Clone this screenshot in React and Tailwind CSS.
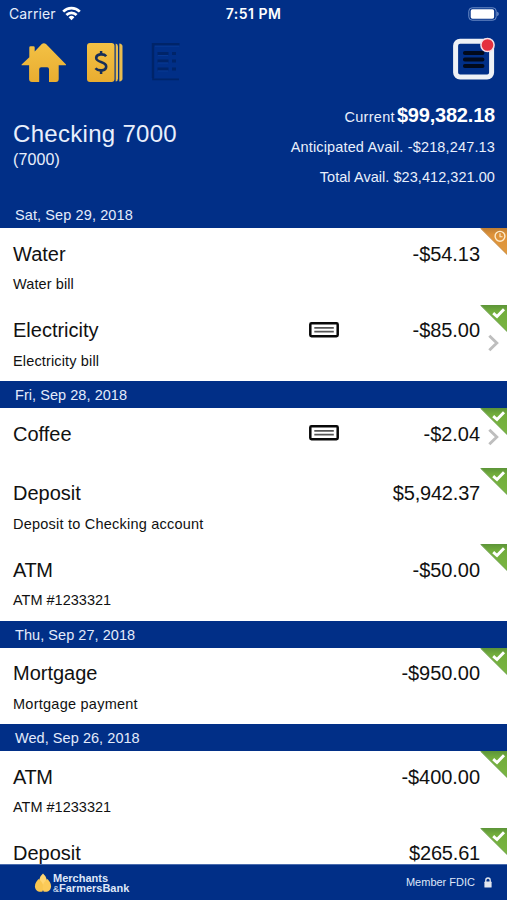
import React from "react";

const groups = [
  {
    date: null,
    rows: [
      { title: "Water", note: "Water bill", noteCls: "tracking-[0.1px]", amount: "-$54.13", pending: true },
      { title: "Electricity", note: "Electricity bill", noteCls: "tracking-[0.15px]", amount: "-$85.00", check: true, more: true },
    ],
  },
  {
    date: "Fri, Sep 28, 2018",
    dateCls: "tracking-[0.1px]",
    rows: [
      { title: "Coffee", amount: "-$2.04", check: true, more: true, short: true },
      { title: "Deposit", note: "Deposit to Checking account", noteCls: "tracking-[0.22px]", amount: "$5,942.37", amountCls: "tracking-[-0.2px]" },
      { title: "ATM", titleCls: "tracking-[-0.4px]", note: "ATM #1233321", amount: "-$50.00" },
    ],
  },
  {
    date: "Thu, Sep 27, 2018",
    rows: [{ title: "Mortgage", note: "Mortgage payment", noteCls: "tracking-[0.25px]", amount: "-$950.00" }],
  },
  {
    date: "Wed, Sep 26, 2018",
    rows: [
      { title: "ATM", titleCls: "tracking-[-0.4px]", note: "ATM #1233321", amount: "-$400.00" },
      { title: "Deposit", amount: "$265.61", amountCls: "tracking-[-0.2px]" },
    ],
  },
];

function Corner({ pending }) {
  return (
    <svg className="absolute right-0 top-0" width="27" height="27" viewBox="0 0 27 27">
      <defs>
        <linearGradient id="cornerGreen" x1="0" y1="0" x2="0" y2="1">
          <stop offset="0" stopColor="#5c9438" />
          <stop offset="0.25" stopColor="#72ad3c" />
          <stop offset="1" stopColor="#7ab542" />
        </linearGradient>
        <linearGradient id="cornerOrange" x1="0" y1="0" x2="0" y2="1">
          <stop offset="0" stopColor="#bd7e34" />
          <stop offset="0.25" stopColor="#dd9138" />
          <stop offset="1" stopColor="#e09a3e" />
        </linearGradient>
      </defs>
      <path d="M0.5 0H27V26.5Z" fill={pending ? "url(#cornerOrange)" : "url(#cornerGreen)"} />
      <path d="M0.5 0.3L27 26.5" stroke={pending ? "#b5762c" : "#558f35"} strokeWidth="1" opacity="0.7" />
      {pending ? (
        <g fill="none" stroke="#fdebcb" strokeWidth="1.4">
          <circle cx="20" cy="8.3" r="4.9" />
          <path d="M20 5.3V8.7H22.5" strokeWidth="1.1" />
        </g>
      ) : (
        <path d="M13.2 8.2L17 11.6L24 4.3" fill="none" stroke="#fff" strokeWidth="2.9" />
      )}
    </svg>
  );
}

function CheckIcon() {
  return (
    <svg width="30" height="16" viewBox="0 0 30 16">
      <rect x="1.3" y="1.3" width="27.4" height="13" rx="1.2" fill="#fff" stroke="#080808" strokeWidth="2.5" />
      <path d="M5.3 5.8H24.8M5.3 9.7H24.8" stroke="#555" strokeWidth="1.7" />
    </svg>
  );
}

function DateBar({ children, className = "" }) {
  return (
    <div className={`flex h-[27px] shrink-0 items-center bg-[#012f87] pl-[15px] pt-[3px] text-[14.5px] text-[#e3ebfb] ${className}`}>
      {children}
    </div>
  );
}

function Row({ row }) {
  return (
    <div className={`relative shrink-0 pl-[13px] pr-[27px] text-[#111] ${row.short ? "h-[59.5px]" : "h-[76.5px]"}`}>
      <div className="flex h-[51px] items-center justify-between">
        <span className={`whitespace-nowrap text-[20px] ${row.titleCls || ""}`}>{row.title}</span>
        <span className={`whitespace-nowrap text-[20px] ${row.amountCls || "tracking-[-0.05px]"}`}>{row.amount}</span>
      </div>
      {row.note && (
        <div className={`-mt-[5px] whitespace-nowrap text-[14.5px] leading-[21px] ${row.noteCls || ""}`}>{row.note}</div>
      )}
      {row.check && (
        <span className="absolute left-[309px] top-[17px]">
          <CheckIcon />
        </span>
      )}
      <Corner pending={row.pending} />
      {row.more && (
        <svg className={`absolute right-[8px] ${row.short ? "top-[20px]" : "top-[29px]"}`} width="11" height="18" viewBox="0 0 11 18">
          <path d="M1.3 1.7L8.8 9L1.3 16.3" fill="none" stroke="#bebebe" strokeWidth="2.9" />
        </svg>
      )}
    </div>
  );
}

function StatusBar() {
  return (
    <div className="flex h-[27px] items-center px-[9px] font-['Inter','Roboto',sans-serif] text-[14px] text-[#e6edfb]">
      <div className="flex flex-1 items-center gap-[6px]">
        <span className="tracking-[0.1px]">Carrier</span>
        <svg width="19" height="15" viewBox="0 0 19 15">
          <g fill="none" stroke="#fff" strokeWidth="2.7">
            <path d="M1.2 5.6A11.8 11.8 0 0 1 17.8 5.6" />
            <path d="M4.4 9A7.2 7.2 0 0 1 14.6 9" />
          </g>
          <path d="M6.6 11.2A4.1 4.1 0 0 1 12.4 11.2L9.5 14.2Z" fill="#fff" />
        </svg>
      </div>
      <span className="font-semibold tracking-[0.5px] text-white">7:51 PM</span>
      <div className="flex flex-1 justify-end">
        <svg className="-mr-[1px]" width="31" height="14" viewBox="0 0 31 14">
          <rect x="0.8" y="0.8" width="27.4" height="12.4" rx="3.4" fill="none" stroke="#6f8fc8" strokeWidth="1" />
          <rect x="2.7" y="2.3" width="23.4" height="9.4" rx="1.7" fill="#fff" />
          <path d="M29.2 4.8C31.200 5.4 31.200 8.6 29.2 9.2Z" fill="#6f8fc8" />
        </svg>
      </div>
    </div>
  );
}

function Toolbar() {
  return (
    <div className="flex h-[73px] items-start pl-[21px] pr-[12px]">
      <svg className="mt-[15px]" width="46" height="41" viewBox="0 0 46 41">
        <defs>
          <linearGradient id="gold" x1="0" y1="0" x2="0" y2="1">
            <stop offset="0" stopColor="#f3c145" />
            <stop offset="1" stopColor="#e9ad30" />
          </linearGradient>
        </defs>
        <path
          d="M0.6 22.4L8.3 15.3V5.5Q8.3 4.2 9.6 4.2H12.4Q13.7 4.2 13.7 5.5V9.6L20.8 2Q22.9 0.3 25 2L45 22.4Q45.4 23.3 44.5 23.3H37.7V37Q37.7 40 34.8 40H28V27.2Q28 25.3 26.2 25.3H20.2Q18.2 25.3 18.2 27.2V40H11Q8.1 40 8.1 37V23.3H1.2Q0.2 23.3 0.6 22.4Z"
          fill="url(#gold)"
        />
      </svg>
      <svg className="ml-[20px] mt-[16px]" width="36" height="39" viewBox="0 0 36 39">
        <rect x="0" y="0" width="27.5" height="39" rx="3" fill="url(#gold)" />
        <path d="M28.7 0.6Q31 1 31 3.6V35.4Q31 38 28.7 38.4Z" fill="#e8bc50" />
        <path d="M32.3 0.6Q35.500 1 35.500 3.6V35.4Q35.500 38 32.3 38.4Z" fill="#e8bc50" />
        <g fill="none" stroke="#172e58">
          <path d="M19.2 13.3C17 10.4 9.4 10.6 9.2 14.9C9 20 19.4 18 19.2 23.6C19 28.2 11.2 28.5 8.5 25.2" strokeWidth="2.6" />
          <path d="M14.1 7.9V12M14.1 26.5V31" strokeWidth="2.5" />
        </g>
      </svg>
      <svg className="ml-[28px] mt-[15px]" width="31" height="41" viewBox="0 0 31 41">
        <g fill="none" stroke="#002469" strokeWidth="2.4">
          <path d="M2 36V2.200H28.500" />
          <path d="M2 35.500V37.400H28" strokeWidth="1.6" />
          <path d="M6.500 11.5H17.500M6.500 19H17.500M6.500 27H17.500M21 11.5H25M21 19H25M21 27H25" strokeWidth="2.8" />
        </g>
        <path d="M4 4.2H28M7 13.5H17M7 21H17M7 29H17" stroke="#0a3c98" strokeWidth="0.8" />
      </svg>
      <svg className="ml-auto mt-[10px]" width="43" height="43" viewBox="0 0 43 43">
        <rect x="3.6" y="4.2" width="36" height="35.8" rx="4.5" fill="none" stroke="#eef1f6" strokeWidth="5" />
        <path d="M12.9 16H30.500M12.9 22.5H30.500M12.9 29H30.500" stroke="#020a1c" strokeWidth="3.9" strokeLinecap="round" />
        <circle cx="35.5" cy="8" r="6.6" fill="#e5303f" stroke="#f7dfe6" strokeWidth="1.5" />
      </svg>
    </div>
  );
}

export default function App() {
  return (
    <div className="flex h-[900px] w-[507px] flex-col overflow-hidden bg-white font-['Liberation_Sans',Arial,sans-serif]">
      <header className="h-[228px] shrink-0 bg-[#012f87] text-[#e9effc]">
        <StatusBar />
        <Toolbar />
        <div className="flex h-[101px] justify-between pl-[13px] pr-[12px]">
          <div className="pt-[19px]">
            <div className="text-[24px] leading-[30px] tracking-[0.3px]">Checking 7000</div>
            <div className="text-[16px] leading-[21px] tracking-[0.1px]">(7000)</div>
          </div>
          <div className="text-right text-[14.5px] leading-[30px] tracking-[0.15px]">
            <div className="flex items-baseline justify-end gap-[2px]">
              <span className="tracking-[0.3px]">Current</span>
              <span className="text-[20px] font-bold tracking-[-0.2px] text-white">$99,382.18</span>
            </div>
            <div>Anticipated Avail. -$218,247.13</div>
            <div className="tracking-[0.05px]">Total Avail. $23,412,321.00</div>
          </div>
        </div>
        <DateBar className="tracking-[0.1px]">Sat, Sep 29, 2018</DateBar>
      </header>
      <main className="flex h-[636px] shrink-0 flex-col overflow-hidden">
        {groups.map((group, i) => (
          <React.Fragment key={i}>
            {group.date && <DateBar className="tracking-[0.05px]">{group.date}</DateBar>}
            {group.rows.map((row, j) => (
              <Row key={j} row={row} />
            ))}
          </React.Fragment>
        ))}
      </main>
      <footer className="flex h-[36px] shrink-0 items-center border-t border-[#4a6cae] bg-[#012f87] pl-[34px] pr-[15px] text-[#dfe7f8]">
        <svg width="18" height="20" viewBox="0 0 18 20">
          <path d="M9 0.500C13 4 14 9 11.500 13H6.500C4 9 5 4 9 0.500Z" fill="#ffd672" />
          <path d="M4.500 6C9 9 10.500 14 8.500 18.500C2 20.500 -2.500 13 4.500 6Z" fill="#f9c650" />
          <path d="M13.500 6C9 9 7.500 14 9.500 18.500C16 20.500 20.500 13 13.500 6Z" fill="#fccb59" />
        </svg>
        <div className="ml-[1px] text-[11px] font-bold">
          <div className="h-[10px] leading-[10px]">Merchants</div>
          <div className="flex h-[10px] items-baseline whitespace-nowrap leading-[10px]">
            <span className="text-[9px] font-normal">&amp;</span>
            <span>FarmersBank</span>
          </div>
        </div>
        <span className="ml-auto text-[11px]">Member FDIC</span>
        <svg className="ml-[9px]" width="8" height="11" viewBox="0 0 8 11">
          <path d="M1.8 5V3.2A2.2 2.2 0 0 1 6.2 3.2V5" fill="none" stroke="#e4e7ee" strokeWidth="1.3" />
          <rect x="0.4" y="4.6" width="7.2" height="6" rx="0.7" fill="#e4e7ee" />
        </svg>
      </footer>
    </div>
  );
}
